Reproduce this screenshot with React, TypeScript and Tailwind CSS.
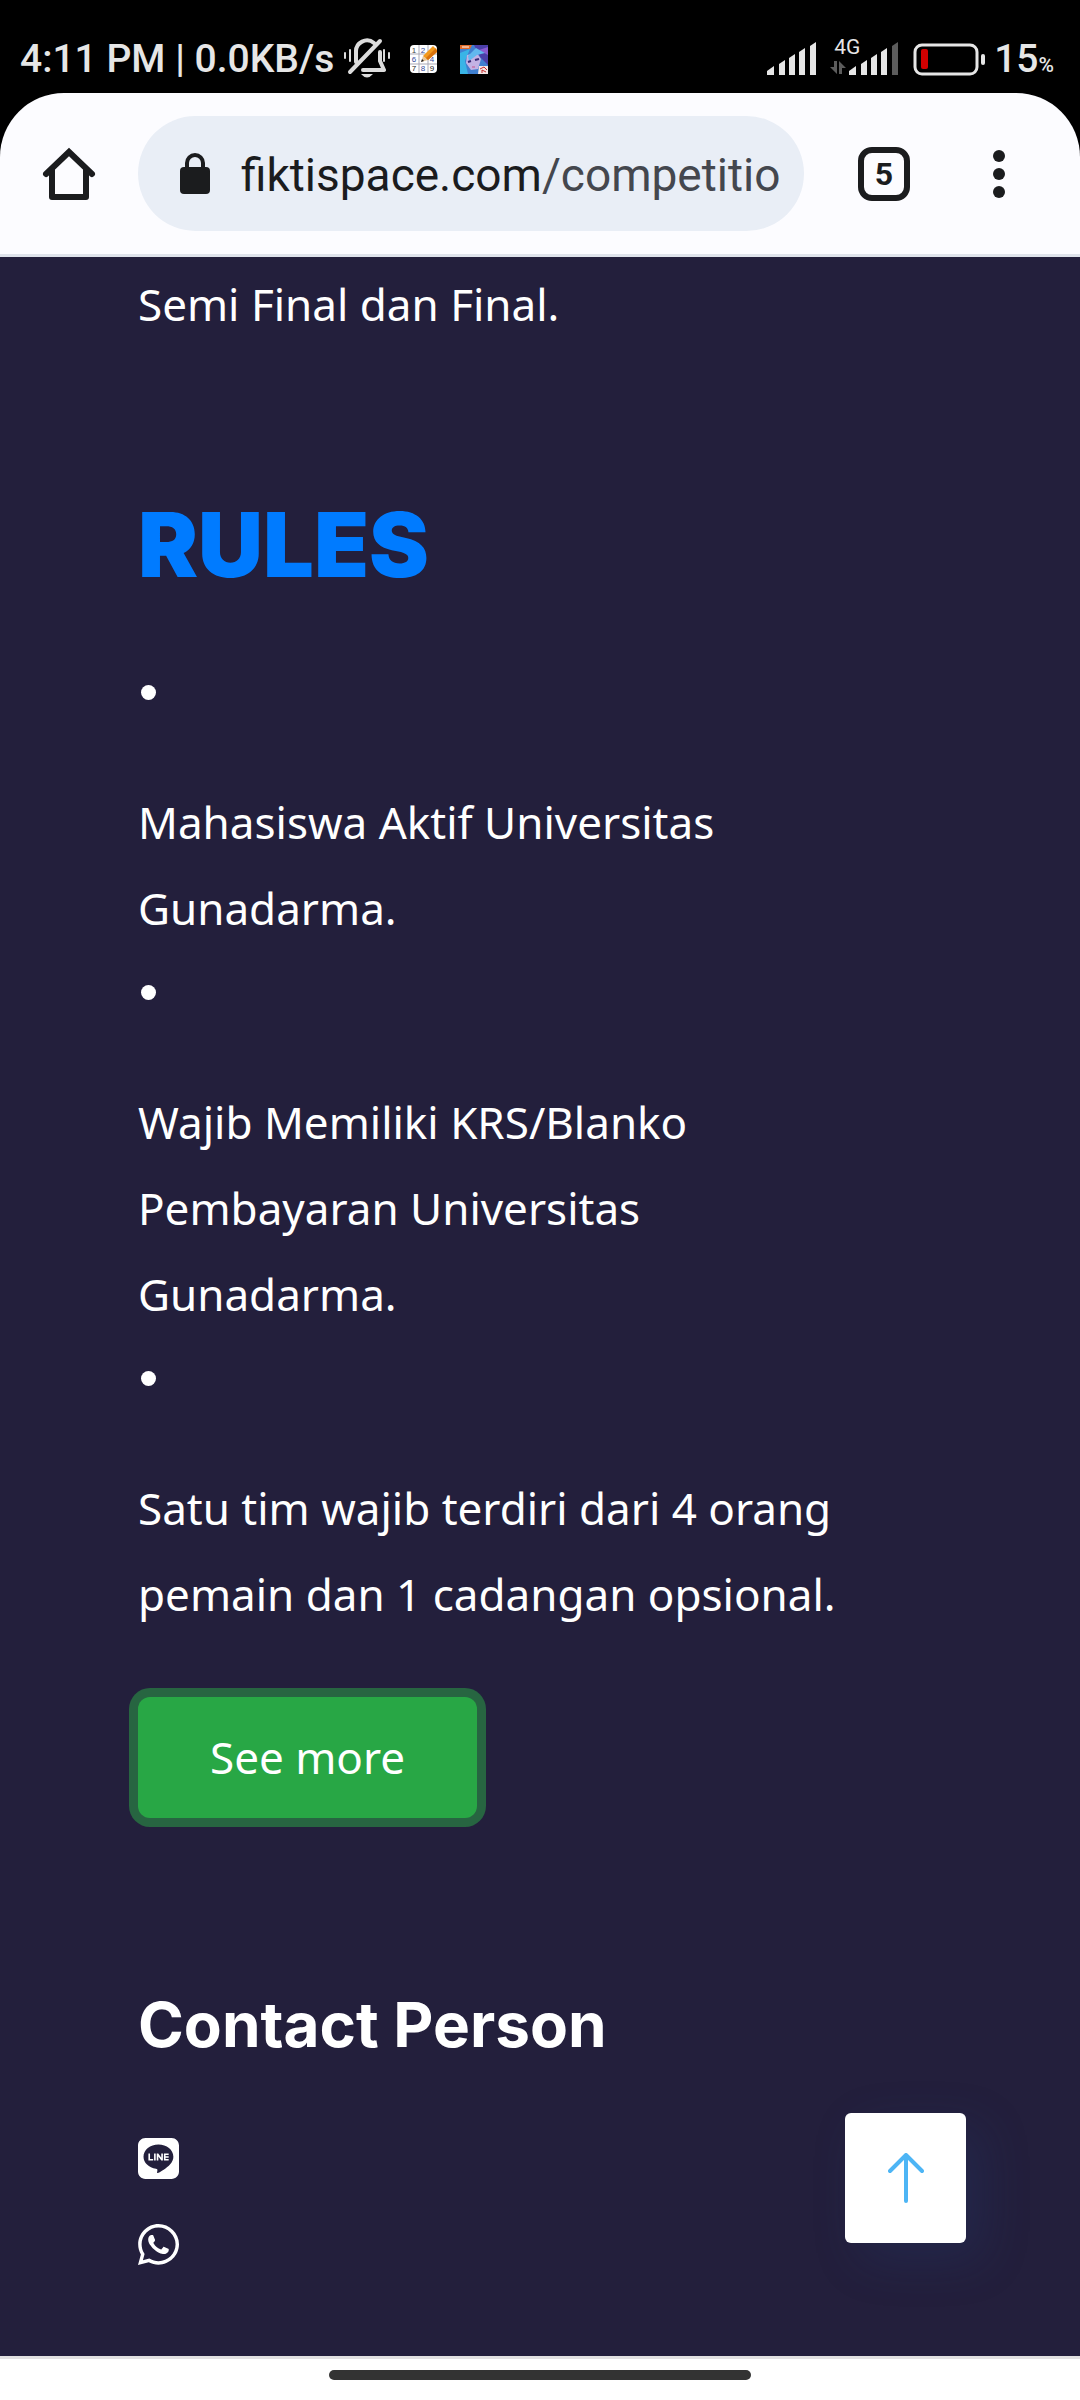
import { FaLine, FaWhatsapp } from "react-icons/fa";

function Signal({ dim = false }: { dim?: boolean }) {
  return (
    <svg width="50" height="34" viewBox="0 0 50 34" fill="#e6e6e6" aria-hidden="true">
      <path d="M0 29 7 24V33H0Z" />
      <path d="M12 22 18 18V33H12Z" />
      <path d="M22 16 28 12V33H22Z" />
      <path d="M32 10 38 6V33H32Z" />
      <path d="M43 4 49 0V33H43Z" fill={dim ? "#5c5c5c" : "#e6e6e6"} />
    </svg>
  );
}

function MutedBell() {
  return (
    <svg width="46" height="42" viewBox="0 0 46 42" fill="none" stroke="#dcdcdc" strokeLinecap="round" aria-hidden="true">
      <path d="M12 24V14A11 11 0 0 1 30 5M36 14V23L40 32H19" strokeWidth="4" strokeLinejoin="round" />
      <path d="M36 3 6 34" strokeWidth="4" />
      <path d="M1 15V20M6 12V23M40 12V23M45 15V20" strokeWidth="2" />
      <path d="M17 36H29Q23 43 17 36Z" fill="#dcdcdc" stroke="none" />
    </svg>
  );
}

function SudokuIcon() {
  return (
    <svg width="27" height="28" viewBox="0 0 27 28" aria-hidden="true">
      <rect width="27" height="28" rx="4" fill="#fff" />
      <path d="M9 0V28M18 0V28M0 9H27M0 19H27" stroke="#a9a9b5" strokeWidth="1" />
      <g fontFamily="Liberation Sans" fontSize="8" fill="#334a9c" textAnchor="middle">
        <text x="4" y="8" fill="#444">1</text>
        <text x="13" y="8">2</text>
        <text x="4" y="17">6</text>
        <text x="22" y="17">4</text>
        <text x="4" y="26" fill="#222">7</text>
        <text x="13" y="26">8</text>
        <text x="22" y="26" fill="#222">9</text>
      </g>
      <path d="M11 17 13 11 18 15Z" fill="#e8c79a" />
      <path d="M11 17 12 14 14 16Z" fill="#222" />
      <path d="M13 11 23 1 27 5V7L18 15Z" fill="#f39a1d" />
      <path d="M16 13 26 3 27 7 18 15Z" fill="#d9720c" />
    </svg>
  );
}

function GameIcon() {
  return (
    <svg width="28" height="29" viewBox="0 0 28 29" aria-hidden="true">
      <rect width="28" height="29" rx="2" fill="#3f7fd0" />
      <path d="M14 0H28V20L20 12Z" fill="#4b3fa8" />
      <path d="M19 5 28 2V10Z" fill="#8a5bd0" />
      <path d="M0 8 10 4 5 16 8 29H0Z" fill="#39b4e6" />
      <path d="M7 10 17 8 21 14 18 24 11 25 6 18Z" fill="#c3b2e4" />
      <path d="M8 11 16 3 25 8 17 10 9 16Z" fill="#62b8ee" />
      <path d="M8 17 11 16M15 15 19 14" stroke="#3b2c78" strokeWidth="2" />
      <path d="M12 22H15" stroke="#c5538f" strokeWidth="1" />
      <path d="M0 0H12L10 4H0Z" fill="#e06a28" />
      <path d="M2 2H9" stroke="#fff" strokeWidth="1" />
      <path d="M19 21H28V29H18Z" fill="#f3e6e6" />
      <path d="M20 24 24 22 27 25M22 28V25L26 27" stroke="#c52a2a" strokeWidth="1" fill="none" />
    </svg>
  );
}

function StatusBar() {
  return (
    <div className="flex h-[93px] items-center justify-between bg-black pt-[25px] pr-[26px] pl-5 text-[#e6e6e6]">
      <div className="flex items-center">
        <span className="text-[39px] leading-[46px] font-medium whitespace-nowrap">4:11 PM | 0.0KB/s</span>
        <span className="ml-[10px]"><MutedBell /></span>
        <span className="ml-5"><SudokuIcon /></span>
        <span className="ml-[23px]"><GameIcon /></span>
      </div>
      <div className="flex items-center">
        <Signal />
        <div className="relative ml-8">
          <span className="absolute -top-[7px] -left-[15px] text-[21px] leading-[24px]">4G</span>
          <svg className="absolute top-[19px] -left-[19px]" width="16" height="13" viewBox="0 0 16 13" fill="#5c5c5c" aria-hidden="true">
            <path d="M4 0H7V13L0 6H4ZM9 13V0L16 7H12V13Z" />
          </svg>
          <Signal dim />
        </div>
        <svg className="ml-[14px]" width="73" height="33" viewBox="0 0 73 33" fill="none" aria-hidden="true">
          <rect x="2" y="2" width="62" height="29" rx="7" stroke="#e6e6e6" strokeWidth="3" />
          <rect x="8" y="6" width="7" height="20" rx="2" fill="#d00000" />
          <rect x="68" y="11" width="4" height="11" rx="2" fill="#e6e6e6" />
        </svg>
        <span className="ml-2 flex items-baseline font-medium">
          <span className="text-[39px] leading-[46px]">15</span>
          <span className="text-[21px]">%</span>
        </span>
      </div>
    </div>
  );
}

function BrowserBar() {
  return (
    <div className="bg-black">
      <div className="flex h-[164px] items-center rounded-t-[64px] border-b-3 border-[#dfe3eb] bg-[#fcfcff] pl-[42px] text-[#1b1c1e]">
        <button type="button" aria-label="Home" className="shrink-0">
          <svg width="54" height="54" viewBox="0 0 54 54" fill="none" stroke="currentColor" strokeWidth="6" strokeLinejoin="round" strokeLinecap="round" aria-hidden="true">
            <path d="M4 27 27 5 50 27" strokeLinejoin="miter" />
            <path d="M10 23V50H44V23" />
          </svg>
        </button>
        <div className="ml-[42px] flex h-[115px] min-w-0 flex-1 items-center rounded-full bg-[#e9eef6] pr-5 pl-[42px]">
          <svg className="shrink-0" width="30" height="41" viewBox="0 0 30 41" aria-hidden="true">
            <path d="M7 16V10A8 8 0 0 1 23 10V16" fill="none" stroke="currentColor" strokeWidth="4" />
            <rect y="14" width="30" height="27" rx="4" fill="currentColor" />
          </svg>
          <a href="https://fiktispace.com/competition" className="ml-[31px] overflow-hidden pt-[2px] text-[46px] leading-[60px] whitespace-nowrap">
            fiktispace.com<span className="text-[#44474e]">/competitio</span>
          </a>
        </div>
        <button type="button" aria-label="Open tabs" className="ml-[54px] flex h-[54px] w-[52px] shrink-0 items-center justify-center rounded-[14px] border-6 border-current text-[32px] leading-none font-bold">
          5
        </button>
        <button type="button" aria-label="Menu" className="mr-[75px] ml-[83px] flex shrink-0 flex-col gap-[6px]">
          <span className="size-3 rounded-full bg-current" />
          <span className="size-3 rounded-full bg-current" />
          <span className="size-3 rounded-full bg-current" />
        </button>
      </div>
    </div>
  );
}

const rules = [
  "Mahasiswa Aktif Universitas Gunadarma.",
  "Wajib Memiliki KRS/Blanko Pembayaran Universitas Gunadarma.",
  "Satu tim wajib terdiri dari 4 orang pemain dan 1 cadangan opsional.",
];

export default function App() {
  return (
    <div className="flex min-h-screen flex-col bg-[#231f3c] font-['Roboto',sans-serif]">
      <StatusBar />
      <BrowserBar />
      <main className="relative flex-1 pt-1 pr-[200px] pb-[70px] pl-[138px] font-['Noto_Sans',sans-serif] text-[44px] leading-[86px] text-white">
        <p>Semi Final dan Final.</p>
        <h2 className="mt-[148px] font-['Inter',sans-serif] text-[90px] leading-[100px] font-black text-[#007bff]">RULES</h2>
        <ul className="mt-[90px] flex flex-col gap-[34px]">
          {rules.map((rule) => (
            <li key={rule}>
              <span className="ml-[3px] block size-[15px] rounded-full bg-white" aria-hidden="true" />
              <p className="pt-[79px]">{rule}</p>
            </li>
          ))}
        </ul>
        <button type="button" className="mt-[60px] block rounded-xl bg-[#28a745] px-[72px] pt-[17px] pb-[18px] ring-9 ring-[#276541]">
          See more
        </button>
        <h3 className="mt-[162px] font-['Inter',sans-serif] text-[62px] leading-[90px] font-bold">Contact Person</h3>
        <div className="mt-[65px] flex flex-col items-start gap-[39px]">
          <a href="#line" aria-label="LINE"><FaLine className="h-[47px] w-[41px]" /></a>
          <a href="#whatsapp" aria-label="WhatsApp"><FaWhatsapp className="h-[47px] w-[41px]" /></a>
        </div>
        <a href="#top" aria-label="Back to top" className="absolute right-[114px] bottom-[113px] flex h-[130px] w-[121px] items-center justify-center rounded-md bg-white shadow-[16px_16px_48px_#24458038]">
          <svg width="36" height="50" viewBox="0 0 36 50" fill="none" stroke="#4db5f5" strokeWidth="4" strokeLinecap="round" strokeLinejoin="round" aria-hidden="true">
            <path d="M18 48V3M2 18 18 2 34 18" />
          </svg>
        </a>
      </main>
      <div className="flex h-[44px] justify-center border-t-3 border-[#e1e1e1] bg-white pt-[11px]">
        <div className="h-[10px] w-[39%] rounded-full bg-[#333]" />
      </div>
    </div>
  );
}
